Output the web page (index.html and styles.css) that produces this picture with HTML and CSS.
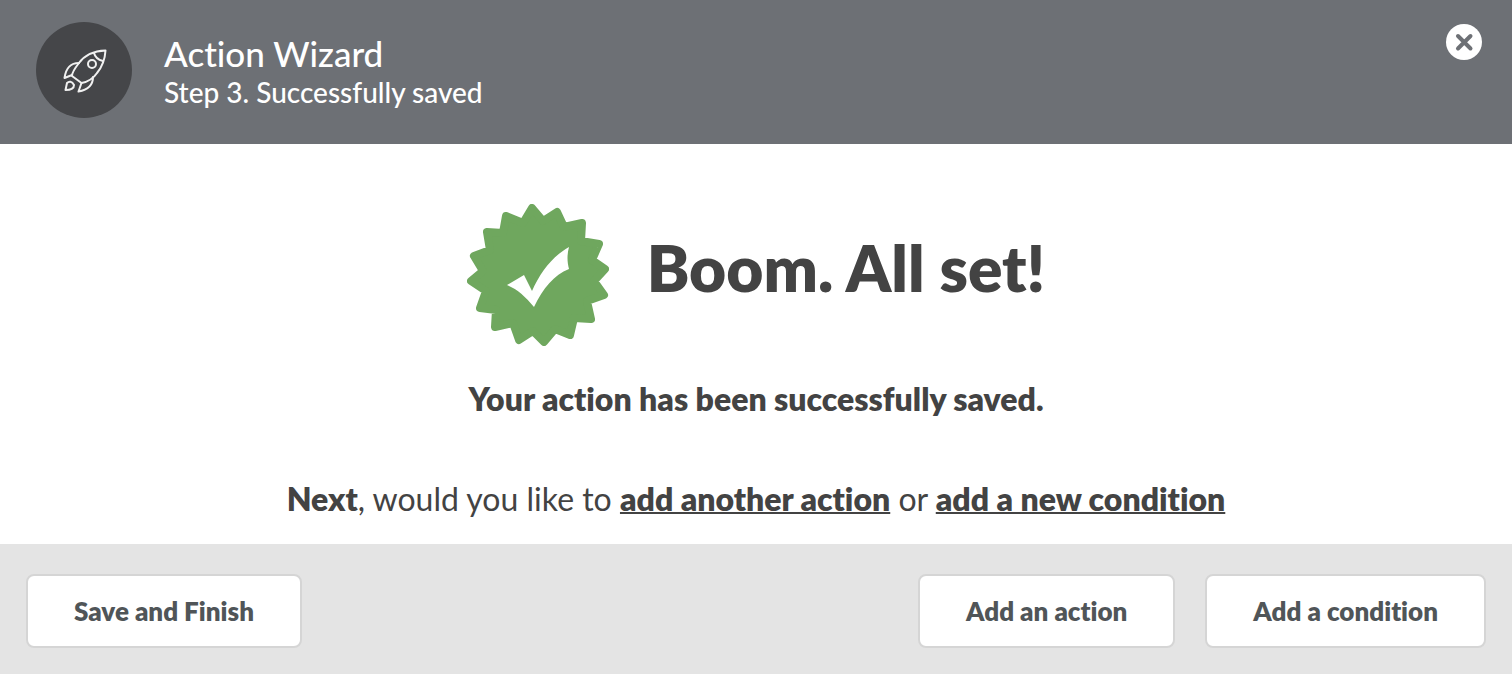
FILE: index.html
```html
<!DOCTYPE html>
<html lang="en">
<head>
  <meta charset="UTF-8">
  <meta name="viewport" content="width=device-width, initial-scale=1.0">
  <title>Action Wizard</title>
  <link rel="stylesheet" href="styles.css">
</head>
<body>
  <div class="wizard">
    <header class="wizard-header">
      <div class="wizard-icon">
        <svg viewBox="0 0 96 96" aria-hidden="true">
          <path d="M69.5 28.5C57 29 48 34 43 41C39 46 36 50 36 54L45.5 61C51 60 57 57 61 51C66 45 69 37 69.5 28.5Z"/>
          <path d="M58 31C59 35 63 38 67 39"/>
          <circle cx="56" cy="42" r="4"/>
          <path d="M43 41C34 41 30 46 28.5 56L36 53"/>
          <path d="M57 55C57 64 51 68 42.5 69.5L45.5 61"/>
          <path d="M29.5 68L31 61C33 59 36 59 38 63C38 66 35 68 29.5 68Z"/>
        </svg>
      </div>
      <div class="wizard-heading">
        <h1>Action Wizard</h1>
        <p>Step 3. Successfully saved</p>
      </div>
      <button class="close-button" type="button" aria-label="Close">
        <svg viewBox="0 0 36 36" aria-hidden="true">
          <path d="M12 12L24.5 24.5M24.5 12L12 24.5"/>
        </svg>
      </button>
    </header>

    <main class="wizard-body">
      <div class="success">
        <svg class="badge" viewBox="0 0 142 142" aria-hidden="true">
          <polygon class="badge-shape" points="65,4 76,17 90,8 97,23 115,19 114,37 132,40 125,56 138,65 127,77 137,91 120,97 124,115 107,114 103,131 88,125 77,138 66,127 52,136 46,119 28,123 29,106 13,104 19,87 4,77 16,67 7,52 23,46 20,28 36,29 39,12 56,19"/>
          <path class="badge-check" d="M40 81L57 71L65 87C74 67 86 52 102 43C100 50 100 58 102 65C87 71 76 84 67 103C58 92 50 85 40 81Z"/>
        </svg>
        <h2>Boom. All set!</h2>
      </div>
      <p class="message"><strong>Your action has been successfully saved.</strong></p>
      <p class="message"><strong>Next</strong>, would you like to <a href="#">add another action</a> or <a href="#">add a new condition</a></p>
    </main>

    <footer class="wizard-footer">
      <button class="button" type="button">Save and Finish</button>
      <div class="button-group">
        <button class="button" type="button">Add an action</button>
        <button class="button" type="button">Add a condition</button>
      </div>
    </footer>
  </div>
</body>
</html>
```
FILE: styles.css
```css
* {
  box-sizing: border-box;
}
body {
  margin: 0;
  background-color: #fff;
  color: #434343;
  font-family: Lato, "Liberation Sans", sans-serif;
  font-variant-ligatures: none;
}
h1,
h2,
p {
  margin: 0;
}
.wizard {
  display: flex;
  flex-direction: column;
  min-height: 100vh;
}
.wizard-header {
  display: flex;
  align-items: flex-start;
  gap: 32px;
  padding: 22px 30px 26px 36px;
  background-color: #6d7075;
  color: #fff;
}
.wizard-icon {
  flex: none;
  width: 96px;
  height: 96px;
  border-radius: 50%;
  background-color: #454649;
}
.wizard-icon svg {
  display: block;
  fill: none;
  stroke: #f0f0f0;
  stroke-width: 2;
  stroke-linejoin: round;
  stroke-linecap: round;
}
.wizard-heading {
  flex: 1;
  padding-top: 10px;
}
.wizard-heading h1 {
  font-size: 35px;
  font-weight: 500;
  line-height: 42px;
}
.wizard-heading p {
  font-size: 28px;
  font-weight: 500;
  line-height: 36px;
}
.close-button {
  width: 36px;
  height: 36px;
  margin-top: 2px;
  padding: 0;
  border: 0;
  border-radius: 50%;
  background-color: #fff;
  cursor: pointer;
}
.close-button svg {
  display: block;
  stroke: #6d7075;
  stroke-width: 4;
  stroke-linecap: round;
}
.wizard-body {
  flex: 1;
  display: flex;
  flex-direction: column;
  align-items: center;
  padding: 60px 24px 24px;
}
.success {
  display: flex;
  align-items: center;
  gap: 38px;
  margin-bottom: 33px;
}
.success h2 {
  padding-bottom: 14px;
  font-size: 64px;
  font-weight: 800;
  line-height: 76px;
}
.badge {
  width: 142px;
  height: 142px;
}
.badge-shape {
  fill: #6fa75e;
  stroke: #6fa75e;
  stroke-width: 8;
  stroke-linejoin: round;
}
.badge-check {
  fill: #fff;
}
.message {
  font-size: 32px;
  line-height: 40px;
  text-align: center;
}
.message + .message {
  margin-top: 60px;
}
.message strong {
  font-weight: 800;
}
.message a {
  color: inherit;
  font-weight: 800;
  text-decoration: underline;
  text-decoration-thickness: 2px;
}
.wizard-footer {
  display: flex;
  justify-content: space-between;
  align-items: center;
  padding: 30px 26px 26px;
  background-color: #e4e4e4;
}
.button-group {
  display: flex;
  gap: 30px;
}
.button {
  height: 74px;
  padding: 0 46px;
  border: 2px solid #d5d5d5;
  border-radius: 8px;
  background-color: #fff;
  color: #505558;
  font-family: inherit;
  font-size: 26px;
  font-weight: 800;
  font-variant-ligatures: none;
  cursor: pointer;
}
```
